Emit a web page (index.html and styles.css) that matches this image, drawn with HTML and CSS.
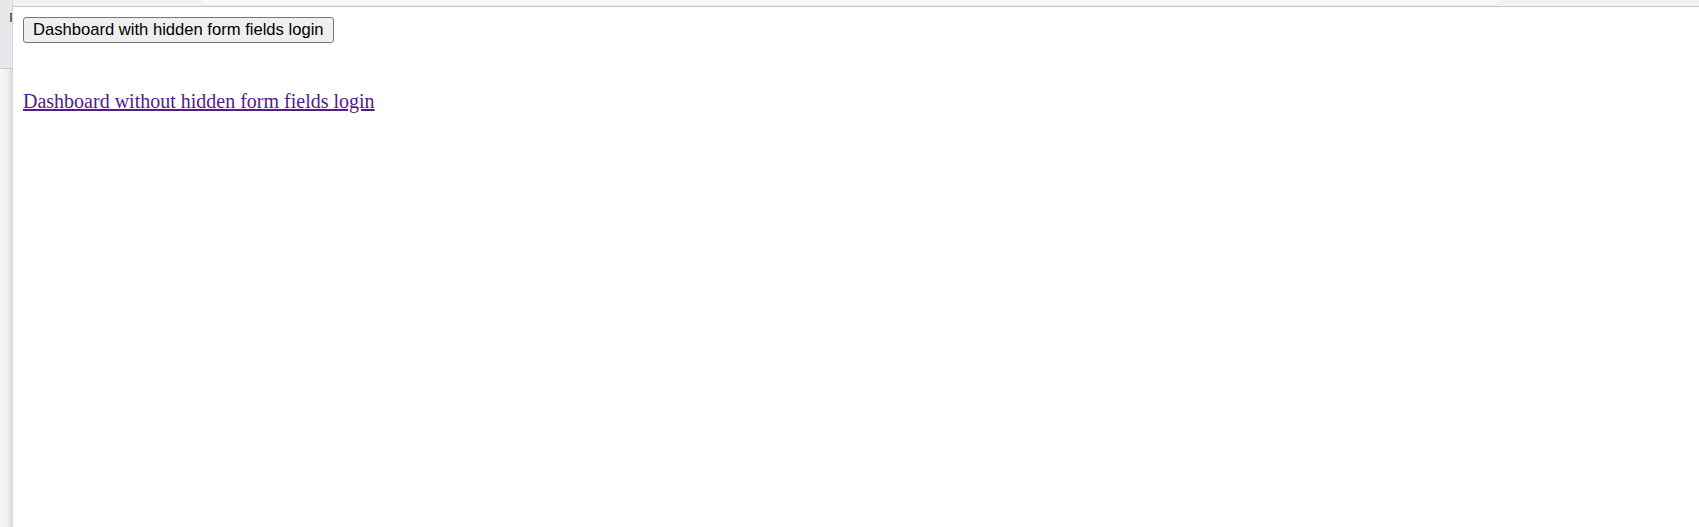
FILE: index.html
```html
<!DOCTYPE html>
<html lang="en">
<head>
<meta charset="utf-8">
<title>Dashboard login</title>
<link rel="stylesheet" href="styles.css">
</head>
<body>
<div class="frame">
  <aside class="side">
    <div class="side-top"><span class="side-glyph">P</span></div>
    <div class="side-rest"></div>
  </aside>
  <div class="main">
    <div class="topbar"><div class="topbar-tab"></div></div>
    <div class="page">
      <form class="login-form">
        <button type="button" class="login-btn">Dashboard with hidden form fields login</button>
      </form>
      <a class="login-link" href="#">Dashboard without hidden form fields login</a>
    </div>
  </div>
</div>
</body>
</html>
```

FILE: styles.css
```css
html, body {
  margin: 0;
  padding: 0;
  height: 100%;
  background: #ffffff;
}

.frame {
  display: grid;
  grid-template-columns: 13px 1fr;
  height: 527px;
  overflow: hidden;
}

.side {
  display: flex;
  flex-direction: column;
  border-right: 1px solid #d6d6d6;
  box-sizing: border-box;
  overflow: hidden;
}

.side-top {
  height: 68px;
  background: #e6e7ea;
  border-bottom: 1px solid #c9c9c9;
  overflow: hidden;
  display: flex;
  justify-content: flex-end;
}

.side-glyph {
  font-family: "Liberation Sans", Arial, sans-serif;
  font-size: 13px;
  line-height: 1;
  color: #333333;
  margin-top: 11px;
  margin-right: -6px;
}

.side-rest {
  flex: 1;
  background: linear-gradient(to right, #f7f7f7 0%, #f1f1f1 60%, #dcdcdc 100%);
}

.main {
  display: flex;
  flex-direction: column;
  min-width: 0;
}

.topbar {
  height: 6px;
  background: #f3f3f3;
  border-bottom: 1px solid #c6c6c6;
  padding: 0 200px 0 188px;
  overflow: hidden;
}

.topbar-tab {
  height: 5px;
  background: #f8f8f8;
  border-radius: 0 0 6px 6px;
  box-shadow: 0 1px 1px #ececec;
}

.page {
  display: flex;
  flex-direction: column;
  align-items: flex-start;
  padding: 10px;
  font-family: "Liberation Serif", "Times New Roman", serif;
  font-size: 20px;
}

.login-form {
  margin: 0;
}

.login-btn {
  display: block;
  font-family: "Liberation Sans", Arial, sans-serif;
  font-size: 16.6px;
  line-height: 20px;
  height: 26px;
  padding: 1px 9px 2px;
  color: #000000;
  background: #efefef;
  border: 1px solid #767676;
  border-radius: 3px;
}

.login-link {
  margin-top: 47px;
  line-height: 23px;
  color: #551a8b;
  text-decoration: underline;
}
```
